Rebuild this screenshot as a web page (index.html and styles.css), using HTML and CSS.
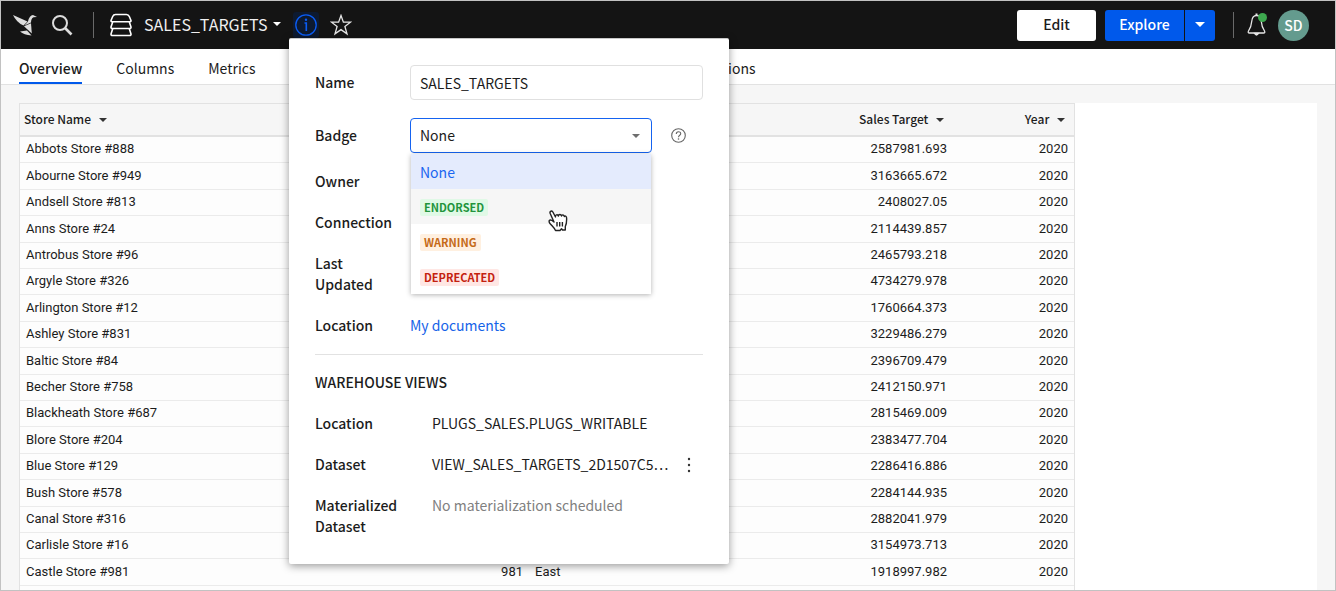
FILE: index.html
```html
<!DOCTYPE html>
<html lang="en">
<head>
  <meta charset="UTF-8">
  <meta name="viewport" content="width=device-width, initial-scale=1.0">
  <title>SALES_TARGETS</title>
  <link rel="stylesheet" href="styles.css">
</head>
<body>
  <div class="app">
    <header class="topbar">
      <a class="logo" href="#" aria-label="Home">
        <svg width="24" height="22" viewBox="0 0 24 22" fill="#dcdcdc">
          <path d="M0 1 L14.500 7.500 L10.500 11.500 Q3.500 8.500 0 1Z"/>
          <path d="M15 7.500 Q16.500 1 20 1 L24 3 L20.500 3.300 Q18 4.500 18 8.500 L11.500 11.500Z"/>
          <path d="M11 12.300 L18 9.300 L18.800 19.500 Z"/>
          <path d="M7 17.500 L14 16.500 L18.500 21.500 Q11 21 7 17.500Z"/>
        </svg>
      </a>
      <button class="icon-btn search-btn" type="button" aria-label="Search">
        <svg width="22" height="22" viewBox="0 0 22 22" fill="none" stroke="#dcdcdc">
          <circle cx="9" cy="9" r="7" stroke-width="2"/>
          <path d="M14 14 L20.500 20.500" stroke-width="2.600"/>
        </svg>
      </button>
      <span class="divider"></span>
      <svg class="dataset-icon" width="24" height="24" viewBox="0 0 24 24" fill="none" stroke="#fff" stroke-width="1.600" stroke-linejoin="round">
        <path d="M6.500 1.500 H17.500 Q19.500 1.500 20.300 3.500 L22 7.500 Q22.200 8.800 20.500 8.800 H3.500 Q1.800 8.800 2 7.500 L3.700 3.500 Q4.500 1.500 6.500 1.500Z"/>
        <path d="M3.700 9 L2 14 Q1.800 15.500 3.500 15.500 H20.500 Q22.200 15.500 22 14 L20.300 9"/>
        <path d="M3.700 15.700 L2 21 Q1.800 22.500 3.500 22.500 H20.500 Q22.200 22.500 22 21 L20.300 15.700"/>
      </svg>
      <button class="title-btn" type="button">
        SALES_TARGETS
        <svg width="8" height="4" viewBox="0 0 8 4" fill="#fff"><path d="M0 0H8L4 4Z"/></svg>
      </button>
      <button class="icon-btn info-btn" type="button" aria-label="Details" aria-expanded="true">
        <svg width="22" height="22" viewBox="0 0 22 22" fill="none" stroke="#0a5cf5">
          <circle cx="11" cy="11" r="10.200" stroke-width="1.300"/>
          <path d="M9.500 9 H11.300 V17" stroke-width="1.600"/>
          <circle cx="11" cy="5.800" r="1.200" fill="#0a5cf5" stroke="none"/>
        </svg>
      </button>
      <button class="icon-btn star-btn" type="button" aria-label="Favorite">
        <svg width="22" height="22" viewBox="0 0 22 22" fill="none" stroke="#e6e6e6" stroke-width="1.300">
          <path d="M11 1.500 L13.400 8.200 H20.500 L14.900 12.500 L17 19.900 L11 15.600 L5 19.900 L7.100 12.500 L1.500 8.200 H8.600Z"/>
        </svg>
      </button>

      <div class="actions">
        <button class="btn btn-edit" type="button">Edit</button>
        <div class="split">
          <button class="btn btn-explore" type="button">Explore</button>
          <button class="btn btn-more" type="button" aria-label="More explore options">
            <svg width="10" height="5" viewBox="0 0 10 5" fill="#fff"><path d="M0 0H10L5 5Z"/></svg>
          </button>
        </div>
        <span class="divider"></span>
        <button class="icon-btn bell-btn" type="button" aria-label="Notifications">
          <svg width="20" height="24" viewBox="0 0 20 24" fill="none" stroke="#e6e6e6" stroke-width="1.300">
            <path d="M9.500 2.500 C6.500 2.500 5 5 4.700 8.500 C4.400 13 3.500 15 1.500 18 Q0.500 20 2.500 20 H16.500 Q18.500 20 17.500 18 C15.500 15 14.600 13 14.300 8.500 C14 5 12.500 2.500 9.500 2.500Z"/>
            <path d="M9.500 0.500 V2.500" stroke-width="2"/>
            <path d="M7.500 20.500 Q9.500 23.500 11.500 20.500Z" fill="#e6e6e6"/>
          </svg>
          <span class="dot"></span>
        </button>
        <button class="avatar" type="button">SD</button>
      </div>
    </header>

    <nav class="tabs">
      <a class="tab active" href="#">Overview</a>
      <a class="tab" href="#">Columns</a>
      <a class="tab" href="#">Metrics</a>
      <a class="tab" href="#">Links</a>
      <a class="tab" href="#">Column-Level Security</a>
      <a class="tab" href="#">Materializations</a>
      <a class="tab" href="#">Permissions</a>
    </nav>

    <main class="content">
      <div class="sheet">
        <table class="grid">
          <colgroup>
            <col class="col-name">
            <col class="col-key">
            <col class="col-region">
            <col class="col-target">
            <col class="col-year">
          </colgroup>
          <thead>
            <tr>
              <th>Store Name <span class="caret"></span></th>
              <th></th>
              <th></th>
              <th class="num">Sales Target <span class="caret"></span></th>
              <th class="num">Year <span class="caret"></span></th>
            </tr>
          </thead>
          <tbody>
            <tr><td>Abbots Store #888</td><td></td><td></td><td class="num">2587981.693</td><td class="num">2020</td></tr>
            <tr><td>Abourne Store #949</td><td></td><td></td><td class="num">3163665.672</td><td class="num">2020</td></tr>
            <tr><td>Andsell Store #813</td><td></td><td></td><td class="num">2408027.05</td><td class="num">2020</td></tr>
            <tr><td>Anns Store #24</td><td></td><td></td><td class="num">2114439.857</td><td class="num">2020</td></tr>
            <tr><td>Antrobus Store #96</td><td></td><td></td><td class="num">2465793.218</td><td class="num">2020</td></tr>
            <tr><td>Argyle Store #326</td><td></td><td></td><td class="num">4734279.978</td><td class="num">2020</td></tr>
            <tr><td>Arlington Store #12</td><td></td><td></td><td class="num">1760664.373</td><td class="num">2020</td></tr>
            <tr><td>Ashley Store #831</td><td></td><td></td><td class="num">3229486.279</td><td class="num">2020</td></tr>
            <tr><td>Baltic Store #84</td><td></td><td></td><td class="num">2396709.479</td><td class="num">2020</td></tr>
            <tr><td>Becher Store #758</td><td></td><td></td><td class="num">2412150.971</td><td class="num">2020</td></tr>
            <tr><td>Blackheath Store #687</td><td></td><td></td><td class="num">2815469.009</td><td class="num">2020</td></tr>
            <tr><td>Blore Store #204</td><td></td><td></td><td class="num">2383477.704</td><td class="num">2020</td></tr>
            <tr><td>Blue Store #129</td><td></td><td></td><td class="num">2286416.886</td><td class="num">2020</td></tr>
            <tr><td>Bush Store #578</td><td></td><td></td><td class="num">2284144.935</td><td class="num">2020</td></tr>
            <tr><td>Canal Store #316</td><td></td><td></td><td class="num">2882041.979</td><td class="num">2020</td></tr>
            <tr><td>Carlisle Store #16</td><td></td><td></td><td class="num">3154973.713</td><td class="num">2020</td></tr>
            <tr><td>Castle Store #981</td><td class="num">981</td><td>East</td><td class="num">1918997.982</td><td class="num">2020</td></tr>
            <tr><td></td><td></td><td></td><td></td><td></td></tr>
          </tbody>
        </table>
      </div>
    </main>

    <section class="popover" aria-label="Dataset details">
      <div class="fields">
        <div class="field">
          <label class="label" for="name">Name</label>
          <input class="text-input" type="text" id="name" value="SALES_TARGETS">
        </div>
        <div class="field">
          <label class="label" for="badge">Badge</label>
          <div class="select-wrap">
            <select class="select" id="badge">
              <option>None</option>
              <option>Endorsed</option>
              <option>Warning</option>
              <option>Deprecated</option>
            </select>
            <svg class="select-caret" width="8" height="4" viewBox="0 0 8 4" fill="#6e6e6e"><path d="M0 0H8L4 4Z"/></svg>
            <ul class="menu" role="listbox" aria-label="Badge">
              <li class="option selected" role="option" aria-selected="true">None</li>
              <li class="option hover" role="option"><span class="badge endorsed">ENDORSED</span></li>
              <li class="option" role="option"><span class="badge warning">WARNING</span></li>
              <li class="option" role="option"><span class="badge deprecated">DEPRECATED</span></li>
            </ul>
            <svg class="pointer" width="20" height="22" viewBox="0 0 20 22" fill="#fff" stroke="#222" stroke-width="1.400" stroke-linejoin="round">
              <path d="M6 12 L2.200 3.500 C1.300 1.200 4 0.200 5 2.200 L7.500 7 C7 4.500 9.800 4 10.400 6 C10.500 3.900 13.200 4 13.500 6 C14 4.300 16 4.700 16.300 6.500 C17.300 5.500 18.600 6.300 18.600 8 C18.800 12 18.500 14 17.300 16.500 V20 H14.500 L13.500 18.800 L12 20.500 H7.500 C6.500 18 4 16 2 13.500 C0.200 11 1.500 9 4 10.500Z"/>
              <path d="M9 12 V16.500 M11.700 12 V16.500 M14.400 12 V16.500"/>
            </svg>
          </div>
          <button class="help-btn" type="button" aria-label="About badges">
            <svg width="15" height="15" viewBox="0 0 15 15" fill="none" stroke="#666" stroke-width="1.100">
              <circle cx="7.500" cy="7.500" r="6.800"/>
              <path d="M5.300 5.900 C5.300 3 9.700 3 9.700 5.700 C9.700 7.300 7.500 7.300 7.500 9.200"/>
              <circle cx="7.500" cy="11" r="0.800" fill="#666" stroke="none"/>
            </svg>
          </button>
        </div>
      </div>
      <dl class="rows">
        <div class="row"><dt class="label">Owner</dt><dd></dd></div>
        <div class="row"><dt class="label">Connection</dt><dd></dd></div>
        <div class="row"><dt class="label">Last Updated</dt><dd></dd></div>
        <div class="row"><dt class="label">Location</dt><dd><a class="link" href="#">My documents</a></dd></div>
      </dl>
      <hr class="rule">
      <h2 class="section-title">WAREHOUSE VIEWS</h2>
      <dl class="rows wide">
        <div class="row"><dt class="label">Location</dt><dd>PLUGS_SALES.PLUGS_WRITABLE</dd></div>
        <div class="row">
          <dt class="label">Dataset</dt>
          <dd class="with-menu">
            <span class="truncate">VIEW_SALES_TARGETS_2D1507C5…</span>
            <button class="kebab" type="button" aria-label="Dataset options">
              <svg width="4" height="16" viewBox="0 0 4 16" fill="#333"><circle cx="2" cy="2" r="1.200"/><circle cx="2" cy="8" r="1.200"/><circle cx="2" cy="14" r="1.200"/></svg>
            </button>
          </dd>
        </div>
        <div class="row"><dt class="label">Materialized Dataset</dt><dd class="muted">No materialization scheduled</dd></div>
      </dl>
    </section>
  </div>
</body>
</html>
```
FILE: styles.css
```css
:root {
  --blue: #0059eb;
  --ink: #1c1c1c;
  --line: #e2e2e2;
  --panel: #f6f6f6;
}

* {
  box-sizing: border-box;
  margin: 0;
  padding: 0;
}

body {
  font-family: "Noto Sans CJK SC", "Open Sans", sans-serif;
  font-size: 14px;
  line-height: 21px;
  color: var(--ink);
  overflow: hidden;
}

button,
input,
select {
  font: inherit;
  color: inherit;
}

button {
  border: none;
  background: none;
  cursor: pointer;
}

svg {
  display: block;
  flex: none;
}

.app {
  position: relative;
  display: flex;
  flex-direction: column;
  height: 100vh;
  border: 1px solid #c2c2c2;
  background: var(--panel);
  overflow: hidden;
}

/* top bar */
.topbar {
  display: flex;
  align-items: center;
  flex: none;
  height: 48px;
  padding: 0 26px 0 12px;
  background: #141414;
  color: #fff;
}

.icon-btn {
  display: flex;
  align-items: center;
  justify-content: center;
}

.search-btn {
  margin: 0 20px 0 14px;
}

.divider {
  width: 1px;
  height: 26px;
  background: #6a6a6a;
}

.dataset-icon {
  margin: 0 11px 0 15px;
}

.title-btn {
  display: flex;
  align-items: center;
  gap: 6px;
  margin-right: 12px;
  padding-bottom: 2px;
  font-size: 16px;
  color: #f0f0f0;
}

.info-btn {
  width: 26px;
  height: 26px;
  border-radius: 3px;
  background: #0d1a30;
}

.star-btn {
  margin-left: 11px;
}

.actions {
  display: flex;
  align-items: center;
  margin-left: auto;
}

.btn {
  height: 31px;
  padding-bottom: 2px;
  font-weight: 500;
  border-radius: 3px;
}

.btn-edit {
  width: 79px;
  margin-right: 9px;
  background: #fff;
  color: var(--ink);
}

.split {
  display: flex;
  gap: 1px;
  margin-right: 18px;
}

.btn-explore {
  width: 79px;
  background: var(--blue);
  border-radius: 3px 0 0 3px;
  color: #fff;
}

.btn-more {
  display: flex;
  align-items: center;
  justify-content: center;
  width: 30px;
  background: var(--blue);
  border-radius: 0 3px 3px 0;
}

.bell-btn {
  position: relative;
  margin: 0 11px 0 13px;
}

.dot {
  position: absolute;
  top: 0;
  right: 0;
  width: 9px;
  height: 9px;
  border-radius: 50%;
  background: #3ea94f;
}

.avatar {
  width: 31px;
  height: 31px;
  border-radius: 50%;
  background: #649b8e;
  color: #fff;
  font-weight: 500;
}

/* tabs */
.tabs {
  display: flex;
  gap: 34px;
  flex: none;
  height: 36px;
  padding: 0 18px;
  background: #fff;
  border-bottom: 1px solid var(--line);
}

.tab {
  height: 35px;
  padding-top: 9px;
  color: inherit;
  text-decoration: none;
  white-space: nowrap;
}

.tab.active {
  font-weight: 500;
  border-bottom: 2px solid var(--blue);
}

/* table */
.content {
  flex: 1;
  min-height: 0;
  padding: 18px 18px 0;
  overflow: hidden;
}

.sheet {
  height: 100%;
  background: #fff;
  overflow: hidden;
}

.grid {
  width: 1056px;
  table-layout: fixed;
  border-collapse: separate;
  border-spacing: 0;
  border: 1px solid var(--line);
  border-bottom: none;
  background: #fdfdfd;
}

.col-name { width: 331px; }
.col-key { width: 178px; }
.col-region { width: 239px; }
.col-target { width: 185px; }
.col-year { width: 121px; }

.grid th {
  height: 33px;
  padding: 0 4px 2px;
  border-bottom: 2px solid var(--line);
  background: var(--panel);
  font-size: 12px;
  font-weight: 500;
  line-height: 18px;
  text-align: left;
}

.grid td {
  height: 26px;
  padding: 0 6px 1px;
  border-bottom: 1px solid #ebebeb;
  font-family: Roboto, sans-serif;
  font-size: 13px;
  line-height: 18px;
}

.grid tr:nth-child(5n+2) td,
.grid tr:nth-child(5n+4) td {
  height: 27px;
}

.grid th.num {
  padding-right: 9px;
  text-align: right;
}

.grid td.num {
  text-align: right;
}

.caret {
  display: inline-block;
  margin-left: 5px;
  border: 4px solid transparent;
  border-top-color: #333;
  border-bottom: none;
  vertical-align: middle;
}

/* details popover */
.popover {
  position: absolute;
  top: 37px;
  left: 288px;
  width: 440px;
  padding: 26px 26px 27px;
  border-top: 1px solid #c8c8c8;
  border-radius: 2px;
  background: #fff;
  box-shadow: 0 2px 8px rgba(0, 0, 0, 0.4);
}

.fields {
  display: flex;
  flex-direction: column;
  gap: 18px;
  margin-bottom: 18px;
}

.field {
  display: flex;
  align-items: center;
}

.label {
  flex: none;
  width: 95px;
  padding-right: 12px;
  font-weight: 500;
}

.text-input,
.select {
  width: 100%;
  height: 35px;
  padding: 0 9px;
  border: 1px solid #e0e0e0;
  border-radius: 4px;
  background: #fff;
}

.text-input {
  flex: 1;
  min-width: 0;
}

.select-wrap {
  position: relative;
  width: 242px;
}

.select {
  display: block;
  border-color: #1563f0;
  appearance: none;
  outline: none;
}

.select-caret {
  position: absolute;
  top: 16px;
  right: 12px;
}

.help-btn {
  margin-left: 19px;
}

.menu {
  position: absolute;
  top: 36px;
  left: 1px;
  right: 1px;
  z-index: 1;
  list-style: none;
  background: #fff;
  box-shadow: 0 1px 5px rgba(0, 0, 0, 0.3);
}

.option {
  display: flex;
  align-items: center;
  height: 35px;
  padding: 2px 9px 0;
}

.option.selected {
  background: #e4ebfd;
  color: #1a66f0;
}

.option.hover {
  background: #f6f6f6;
}

.badge {
  padding: 0 4px;
  border-radius: 2px;
  font-size: 11px;
  font-weight: 700;
  line-height: 17px;
}

.endorsed {
  background: #e0f9e6;
  color: #22943c;
}

.warning {
  background: #fff0e0;
  color: #c56a17;
}

.deprecated {
  background: #ffe7e4;
  color: #c4210f;
}

.pointer {
  position: absolute;
  top: 92px;
  left: 138px;
  z-index: 2;
}

.rows {
  display: flex;
  flex-direction: column;
  gap: 20px;
}

.row {
  display: flex;
}

.row dd {
  flex: 1;
  min-width: 0;
}

.wide .label {
  width: 117px;
}

.link {
  color: #1563e8;
  text-decoration: none;
}

.rule {
  margin: 18px 0 17px;
  border: none;
  border-top: 1px solid var(--line);
}

.section-title {
  margin-bottom: 20px;
  font-size: 14px;
  font-weight: 500;
  line-height: 21px;
}

.with-menu {
  display: flex;
  align-items: center;
  justify-content: space-between;
}

.truncate {
  white-space: nowrap;
}

.kebab {
  margin-right: 12px;
}

.muted {
  color: #808080;
}
```
